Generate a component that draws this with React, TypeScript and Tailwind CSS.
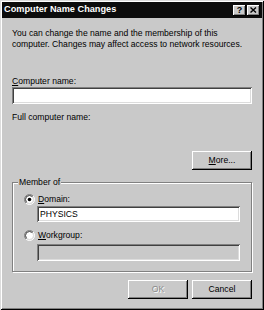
import React from 'react';

const font = { fontFamily: '"Liberation Sans", Arial, sans-serif' };

function Radio({ id, checked }: { id: string; checked?: boolean }) {
  return (
    <svg width="11" height="11" viewBox="0 0 11 11" className="shrink-0">
      <defs>
        <linearGradient id={`${id}-o`} x1="0" y1="0" x2="1" y2="1">
          <stop offset="0.45" stopColor="#808080" />
          <stop offset="0.55" stopColor="#ffffff" />
        </linearGradient>
        <linearGradient id={`${id}-i`} x1="0" y1="0" x2="1" y2="1">
          <stop offset="0.45" stopColor="#404040" />
          <stop offset="0.55" stopColor="#dcdcdc" />
        </linearGradient>
      </defs>
      <circle cx="5.5" cy="5.5" r="5" fill="none" stroke={`url(#${id}-o)`} strokeWidth="1" />
      <circle cx="5.5" cy="5.5" r="4" fill="#ffffff" stroke={`url(#${id}-i)`} strokeWidth="1" />
      {checked && <circle cx="5.5" cy="5.5" r="1.8" fill="#000000" />}
    </svg>
  );
}

const sunken =
  'shadow-[inset_1px_1px_0_#808080,inset_-1px_-1px_0_#ffffff,inset_2px_2px_0_#404040,inset_-2px_-2px_0_#dcdcdc]';
const raised =
  'shadow-[inset_-1px_-1px_0_#000000,inset_1px_1px_0_#ffffff,inset_-2px_-2px_0_#808080]';

export default function App() {
  return (
    <div
      style={font}
      className="w-[264px] h-[310px] bg-[#c9c9c9] p-[2px] flex flex-col text-black shadow-[inset_1px_1px_0_#dcdcdc,inset_-1px_-1px_0_#000000,inset_2px_2px_0_#ffffff,inset_-2px_-2px_0_#808080]"
    >
      {/* Title bar */}
      <div className="h-[16px] bg-[#0c0c0c] flex items-center pl-[2px] pr-[2px]">
        <span className="text-[9.2px] font-bold text-white leading-none flex-1">Computer Name Changes</span>
        <div className="flex gap-[1px]">
          <div className={`w-[13px] h-[11px] bg-[#c9c9c9] ${raised} flex items-center justify-center`}>
            <span className="text-[9px] font-bold leading-none">?</span>
          </div>
          <div className={`w-[13px] h-[11px] bg-[#c9c9c9] ${raised} flex items-center justify-center`}>
            <svg width="7" height="6" viewBox="0 0 7 6">
              <path d="M0.5 0.5 L6 5.5 M6 0.5 L0.5 5.5" stroke="#000" strokeWidth="1.4" />
            </svg>
          </div>
        </div>
      </div>

      {/* Body */}
      <div className="flex flex-col px-[10px] text-[8.6px]">
        <p className="mt-[10px] leading-[10.5px]">
          You can change the name and the membership of this
          <br />
          computer. Changes may affect access to network resources.
        </p>

        <div className="mt-[26px] h-[12px] leading-[12px]">
          <span className="underline underline-offset-[1px]">C</span>omputer name:
        </div>
        <div className={`h-[17px] bg-white ${sunken}`} />

        <div className="mt-[7px] h-[12px] leading-[12px]">Full computer name:</div>

        <button
          className={`mt-[28px] self-end w-[60px] h-[19px] bg-[#c9c9c9] ${raised} flex items-center justify-center`}
        >
          <span>
            <span className="underline underline-offset-[1px]">M</span>ore...
          </span>
        </button>

        {/* Member of group */}
        <div className="relative mt-[12px] h-[90px] border border-[#808080] shadow-[inset_1px_1px_0_#ffffff,1px_1px_0_#ffffff] flex flex-col pl-[11px] pr-[11px]">
          <span className="absolute left-[5px] top-[-7px] px-[1px] bg-[#c9c9c9] leading-[12px]">Member of</span>

          <div className="mt-[11px] h-[11px] flex items-center gap-[3px]">
            <Radio id="r1" checked />
            <span className="leading-[11px]">
              <span className="underline underline-offset-[1px]">D</span>omain:
            </span>
          </div>
          <div className={`mt-[1px] ml-[13px] h-[16px] bg-white ${sunken} flex items-center pl-[3px]`}>
            <span className="leading-none">PHYSICS</span>
          </div>

          <div className="mt-[8px] h-[11px] flex items-center gap-[3px]">
            <Radio id="r2" />
            <span className="leading-[11px]">
              <span className="underline underline-offset-[1px]">W</span>orkgroup:
            </span>
          </div>
          <div className={`mt-[3px] ml-[13px] h-[17px] bg-[#c9c9c9] ${sunken}`} />
        </div>

        {/* Buttons */}
        <div className="mt-[8px] flex justify-end gap-[4px]">
          <button className={`w-[60px] h-[19px] bg-[#c9c9c9] ${raised} flex items-center justify-center`}>
            <span className="text-[#8a8a8a] [text-shadow:1px_1px_0_#ffffff]">OK</span>
          </button>
          <button className={`w-[60px] h-[19px] bg-[#c9c9c9] ${raised} flex items-center justify-center`}>
            Cancel
          </button>
        </div>
      </div>
    </div>
  );
}
